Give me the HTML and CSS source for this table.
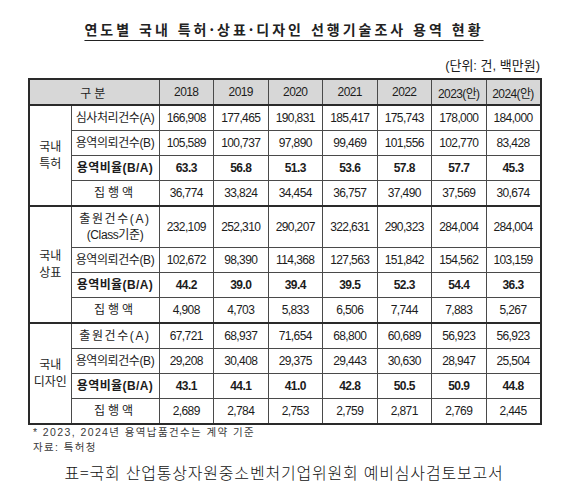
FILE: index.html
```html
<!DOCTYPE html>
<html lang="ko">
<head>
    <meta charset="UTF-8">
    <meta name="viewport" content="width=device-width, initial-scale=1.0">
    <title>연도별 국내 특허·상표·디자인 선행기술조사 용역 현황</title>
    <link rel="stylesheet" href="styles.css">
</head>
<body>
    <div class="page">
        <h1 class="title">연도별 국내 특허·상표·디자인 선행기술조사 용역 현황</h1>
        <p class="unit">(단위: 건, 백만원)</p>

        <table class="stats">
            <colgroup>
                <col class="c-group">
                <col class="c-label">
                <col class="c-year"><col class="c-year"><col class="c-year"><col class="c-year">
                <col class="c-year"><col class="c-year"><col class="c-year">
            </colgroup>
            <thead>
                <tr>
                    <th colspan="2" class="spaced">구분</th>
                    <th>2018</th>
                    <th>2019</th>
                    <th>2020</th>
                    <th>2021</th>
                    <th>2022</th>
                    <th>2023(안)</th>
                    <th>2024(안)</th>
                </tr>
            </thead>

            <!-- 국내 특허 -->
            <tbody class="section">
                <tr>
                    <td rowspan="4" class="group">국내<br>특허</td>
                    <td class="label">심사처리건수(A)</td>
                    <td>166,908</td><td>177,465</td><td>190,831</td><td>185,417</td><td>175,743</td><td>178,000</td><td>184,000</td>
                </tr>
                <tr>
                    <td class="label">용역의뢰건수(B)</td>
                    <td>105,589</td><td>100,737</td><td>97,890</td><td>99,469</td><td>101,556</td><td>102,770</td><td>83,428</td>
                </tr>
                <tr class="ratio">
                    <td class="label">용역비율(B/A)</td>
                    <td>63.3</td><td>56.8</td><td>51.3</td><td>53.6</td><td>57.8</td><td>57.7</td><td>45.3</td>
                </tr>
                <tr>
                    <td class="label wide">집행액</td>
                    <td>36,774</td><td>33,824</td><td>34,454</td><td>36,757</td><td>37,490</td><td>37,569</td><td>30,674</td>
                </tr>
            </tbody>

            <!-- 국내 상표 -->
            <tbody class="section">
                <tr class="tall">
                    <td rowspan="4" class="group">국내<br>상표</td>
                    <td class="label"><span class="spread">출원건수(A)</span><br>(Class기준)</td>
                    <td>232,109</td><td>252,310</td><td>290,207</td><td>322,631</td><td>290,323</td><td>284,004</td><td>284,004</td>
                </tr>
                <tr>
                    <td class="label">용역의뢰건수(B)</td>
                    <td>102,672</td><td>98,390</td><td>114,368</td><td>127,563</td><td>151,842</td><td>154,562</td><td>103,159</td>
                </tr>
                <tr class="ratio">
                    <td class="label">용역비율(B/A)</td>
                    <td>44.2</td><td>39.0</td><td>39.4</td><td>39.5</td><td>52.3</td><td>54.4</td><td>36.3</td>
                </tr>
                <tr>
                    <td class="label wide">집행액</td>
                    <td>4,908</td><td>4,703</td><td>5,833</td><td>6,506</td><td>7,744</td><td>7,883</td><td>5,267</td>
                </tr>
            </tbody>

            <!-- 국내 디자인 -->
            <tbody class="section">
                <tr>
                    <td rowspan="4" class="group">국내<br>디자인</td>
                    <td class="label"><span class="spread">출원건수(A)</span></td>
                    <td>67,721</td><td>68,937</td><td>71,654</td><td>68,800</td><td>60,689</td><td>56,923</td><td>56,923</td>
                </tr>
                <tr>
                    <td class="label">용역의뢰건수(B)</td>
                    <td>29,208</td><td>30,408</td><td>29,375</td><td>29,443</td><td>30,630</td><td>28,947</td><td>25,504</td>
                </tr>
                <tr class="ratio">
                    <td class="label">용역비율(B/A)</td>
                    <td>43.1</td><td>44.1</td><td>41.0</td><td>42.8</td><td>50.5</td><td>50.9</td><td>44.8</td>
                </tr>
                <tr>
                    <td class="label wide">집행액</td>
                    <td>2,689</td><td>2,784</td><td>2,753</td><td>2,759</td><td>2,871</td><td>2,769</td><td>2,445</td>
                </tr>
            </tbody>
        </table>

        <p class="note">* 2023, 2024년 용역납품건수는 계약 기준</p>
        <p class="note">자료: 특허청</p>

        <p class="caption">표=국회 산업통상자원중소벤처기업위원회 예비심사검토보고서</p>
    </div>
</body>
</html>
```

FILE: styles.css
```css
body {
    margin: 0;
    background: #fff;
    color: #1c1c1c;
    font-family: "Liberation Sans", "Noto Sans CJK KR", sans-serif;
}
.page {
    width: 512px;
    padding: 20px 27px 0 28px;
}
.title {
    margin: 0;
    font-family: "Noto Sans CJK KR", sans-serif;
    font-size: 14px;
    line-height: 18px;
    font-weight: bold;
    letter-spacing: 3px;
    text-align: center;
    text-decoration: underline;
    text-decoration-thickness: 1px;
    text-underline-offset: 5px;
    color: #222;
}
.unit {
    margin: 20px 0 4px;
    font-size: 13px;
    line-height: 16px;
    text-align: right;
}
.stats {
    width: 512px;
    table-layout: fixed;
    border-collapse: collapse;
    border: 2px solid #2a2a2a;
    font-size: 12px;
    letter-spacing: -0.6px;
}
.c-group { width: 42px; }
.c-label { width: 88px; }
.c-year { width: 54.5px; }
.stats th,
.stats td {
    border: 1px solid #4a4a4a;
    padding: 0;
    height: 24px;
    text-align: center;
    font-weight: normal;
    white-space: nowrap;
}
.stats thead th {
    background: #d7d7d7;
    border-bottom: 2px solid #2a2a2a;
}
.stats .section {
    border-top: 2px solid #2a2a2a;
}
.stats .tall td {
    height: 40px;
}
.stats .group {
    font-size: 12px;
    line-height: 17px;
    letter-spacing: 0;
}
.stats .label {
    line-height: 16px;
    letter-spacing: -0.4px;
}
.stats .wide,
.stats .spaced {
    letter-spacing: 3px;
}
.spread {
    letter-spacing: 1.6px;
}
.stats .ratio td {
    font-weight: bold;
}
.stats .ratio .label {
    letter-spacing: 0.4px;
}
.note {
    margin: 0;
    padding-left: 5px;
    font-size: 10.5px;
    line-height: 15px;
    color: #3a3a3a;
    letter-spacing: 1.4px;
}
.note:first-of-type {
    margin-top: 3px;
}
.caption {
    margin: 7px 0 0;
    font-family: "Noto Sans CJK KR", sans-serif;
    font-size: 16px;
    line-height: 20px;
    font-weight: 300;
    letter-spacing: 0.8px;
    text-align: center;
    color: #111;
}
```
